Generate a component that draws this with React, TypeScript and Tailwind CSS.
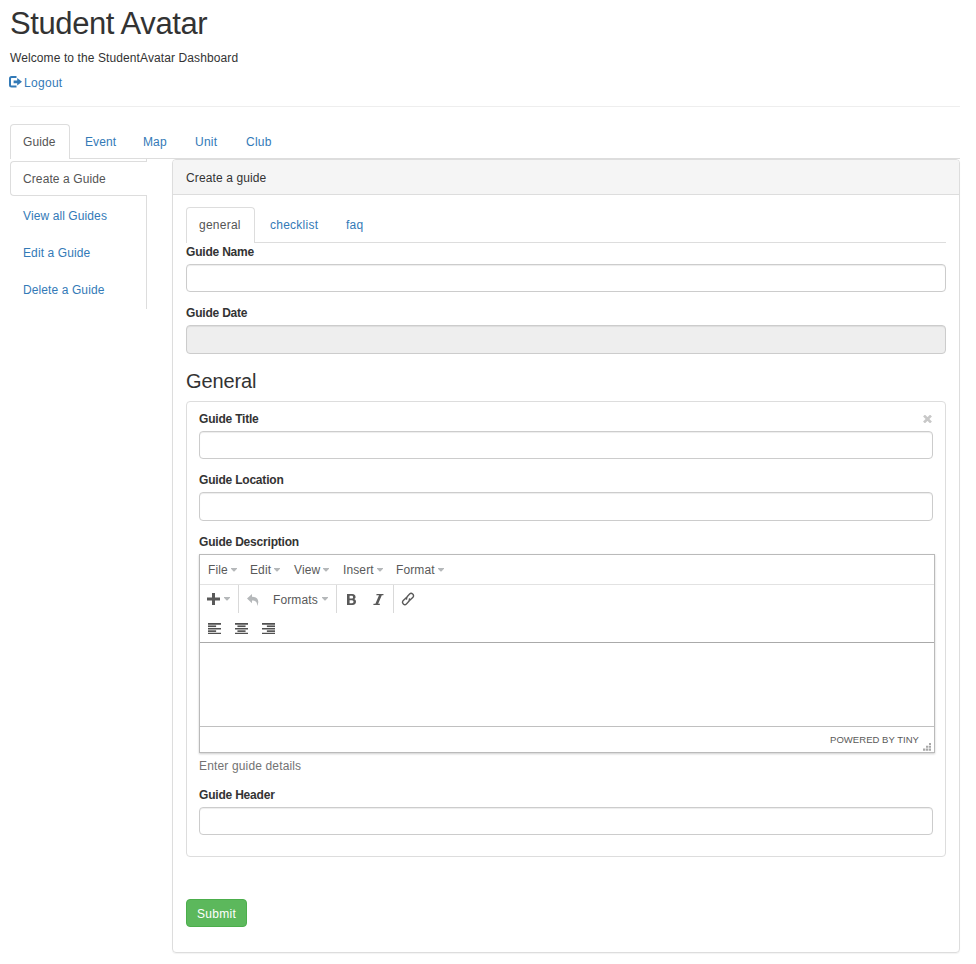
import React from "react";

const mainTabs = [
  { label: "Event", cls: "w-[58px]" },
  { label: "Map", cls: "w-[52px]" },
  { label: "Unit", cls: "w-[51px] tracking-[0.25px]" },
  { label: "Club", cls: "w-[56px] tracking-[0.25px]" },
];

const Caret = ({ className = "" }: { className?: string }) => (
  <svg className={`shrink-0 ${className}`} width="6" height="4" viewBox="0 0 6 4" fill="#b5b8ba">
    <path d="M0 0H6V.8L3.4 3.4H2.6L0 .8Z" />
  </svg>
);

const Label = ({ children }: { children: React.ReactNode }) => (
  <label className="block h-[18px] text-[12px] font-bold leading-[18px] tracking-[-0.2px]">{children}</label>
);

const Field = ({ className = "h-7" }: { className?: string }) => (
  <input
    className={`block w-full rounded-[4px] border border-[#ccc] bg-white px-2.5 shadow-[inset_0_1px_1px_rgba(0,0,0,0.075)] outline-none ${className}`}
  />
);

const Menu = ({ label, width, gap }: { label: string; width: string; gap: string }) => (
  <div className={`flex items-center ${width}`}>
    <span className={gap}>{label}</span>
    <Caret />
  </div>
);

const Align = ({ offset }: { offset: number }) => (
  <svg className="mr-[14px] mt-[2px]" width="13" height="11.4" viewBox="0 0 16 14" fill="#505050">
    <path d="M0 0h16v2H0zM0 6h16v2H0zM0 12h16v2H0z" />
    <rect x={offset} y="3" width="10" height="2" />
    <rect x={offset} y="9" width="10" height="2" />
  </svg>
);

export default function App() {
  return (
    <div className="h-[964px] w-[976px] overflow-hidden bg-white pl-[10px] pr-4 font-['Liberation_Sans',Arial,sans-serif] text-[12px] leading-[18px] tracking-[0.12px] text-[#333]">
      <h1 className="h-[49px] pt-[6px] text-[31px] leading-[35px] tracking-[-0.4px]">Student Avatar</h1>
      <p className="h-[25px] tracking-[0.1px]">Welcome to the StudentAvatar Dashboard</p>
      <a className="flex h-[32px] items-start tracking-[0.3px] text-[#337ab7]">
        <svg className="-ml-px mr-[2px] mt-[2px]" width="13" height="12" viewBox="0 0 13 12" fill="none">
          <path d="M7.5 1.1H2.6Q1 1.1 1 2.7V9Q1 10.5 2.6 10.5H7.5" stroke="#337ab7" strokeWidth="2" />
          <path d="M4.6 4.4H8.2V2L13 5.8L8.2 9.6V7.2H4.6Z" fill="#337ab7" />
        </svg>
        Logout
      </a>
      <hr className="mb-[17px] border-0 border-t border-[#eee]" />

      <nav className="flex h-[35px] border-b border-[#ddd] text-[#337ab7]">
        <a className="h-[35px] w-[60px] rounded-t-[4px] border border-b-0 border-[#ddd] bg-white pl-3 pt-2 text-[#555]">Guide</a>
        <div className="flex pl-[15px] pt-[9px]">
          {mainTabs.map((t) => (
            <a key={t.label} className={t.cls}>{t.label}</a>
          ))}
        </div>
      </nav>

      <div className="flex">
        <aside className="mr-[25px] h-[150px] w-[137px] shrink-0 border-r border-[#ddd] pt-[2px] tracking-[0.1px] text-[#337ab7]">
          <a className="-mr-px block h-[35px] rounded-l-[4px] border border-r-0 border-[#ddd] bg-white pl-3 pt-2 text-[#555]">Create a Guide</a>
          {["View all Guides", "Edit a Guide", "Delete a Guide"].map((t) => (
            <a key={t} className="mt-0.5 block h-[35px] pl-[13px] pt-[9px]">{t}</a>
          ))}
        </aside>

        <main className="h-[794px] w-[788px] rounded-[4px] border border-[#ddd] shadow-[0_1px_1px_rgba(0,0,0,0.05)]">
          <header className="h-[35px] rounded-t-[3px] border-b border-[#ddd] bg-[#f5f5f5] pl-[13px] pt-[9px]">Create a guide</header>
          <div className="px-[13px] pt-3">
            <nav className="flex h-[36px] border-b border-[#ddd] tracking-[0.25px] text-[#337ab7]">
              <a className="h-[36px] w-[69px] rounded-t-[4px] border border-b-0 border-[#ddd] bg-white pl-3 pt-2 text-[#555]">general</a>
              <a className="w-[76px] pl-[15px] pt-[9px]">checklist</a>
              <a className="pl-[15px] pt-[9px]">faq</a>
            </nav>
            <Label>Guide Name</Label>
            <div className="mb-3 mt-[3px]"><Field /></div>
            <Label>Guide Date</Label>
            <div className="mt-[3px]"><Field className="h-[29px] bg-[#eee]!" /></div>
            <h3 className="mb-[9px] mt-[16px] h-[22px] text-[20px] leading-[22px] tracking-[-0.1px]">General</h3>

            <section className="h-[456px] rounded-[4px] border border-[#ddd] px-3 pt-2">
              <div className="flex justify-between">
                <Label>Guide Title</Label>
                <svg className="mr-[1px] mt-[5px]" width="9" height="8" viewBox="0 0 9 8" stroke="#c8c8c8" strokeWidth="2.6">
                  <path d="M1 .5L8 7.5M8 .5L1 7.5" />
                </svg>
              </div>
              <div className="mb-3 mt-[3px]"><Field /></div>
              <Label>Guide Location</Label>
              <div className="mb-3 mt-[3px]"><Field className="h-[29px]" /></div>
              <Label>Guide Description</Label>

              <div className="mt-[3px] h-[199px] w-[736px] border border-[#bababa] text-[#595959] shadow-[0_1px_2px_rgba(0,0,0,0.2)]">
                <div className="flex h-[30px] border-b border-[#e2e2e2] pl-2">
                  <Menu label="File" width="w-[42px]" gap="w-[23px]" />
                  <Menu label="Edit" width="w-[44px]" gap="w-[24px]" />
                  <Menu label="View" width="w-[49px]" gap="w-[29px]" />
                  <Menu label="Insert" width="w-[53px]" gap="w-[34px]" />
                  <Menu label="Format" width="w-[60px]" gap="w-[42px]" />
                </div>
                <div className="flex h-[28px] items-center">
                  <div className="flex h-full w-[39px] items-center border-r border-[#d9d9d9] pl-[7px]">
                    <svg width="13" height="12" viewBox="0 0 13 12" fill="#595959"><path d="M5 0H8V4.5H13V7.5H8V12H5V7.5H0V4.5H5Z" /></svg>
                    <Caret className="ml-[4px]" />
                  </div>
                  <div className="flex h-full w-[98px] items-center border-r border-[#d9d9d9] pl-[8px]">
                    <svg className="mt-px" width="12" height="12" viewBox="0 0 12 12" fill="#b5b8ba"><path d="M0 4.5L5 0V2.7C10 2.7 13.2 6 10 12C10.5 8 8.5 6.6 5 6.6V9.2Z" /></svg>
                    <span className="ml-[14px] w-[49px] pt-px">Formats</span>
                    <Caret />
                  </div>
                  <div className="flex h-full w-[57px] items-center border-r border-[#d9d9d9] pl-[10px]">
                    <svg width="9" height="11" viewBox="0 0 9 11" fill="#595959" fillRule="evenodd"><path d="M0 0H5.2C9.2 0 9.3 4.3 7.2 5.1C10 6 9.6 11 5.4 11H0ZM2.6 1.8V4.4H4.7C6.6 4.4 6.5 1.8 4.7 1.8ZM2.6 6.2V9.2H5C7 9.2 7 6.2 5 6.2Z" /></svg>
                    <svg className="ml-[17px]" width="11" height="11" viewBox="0 0 11 11" fill="#595959"><path d="M3.6 0H10.6L10.3 1.2H8.8L5.2 9.8H7L6.7 11H.3L.6 9.8H2.4L6 1.2H3.3Z" /></svg>
                  </div>
                  <svg className="ml-[7px]" width="14" height="14" viewBox="0 0 14 14" fill="none" stroke="#595959" strokeWidth="1.4"><path d="M5.9 7.5C5 6.3 5.3 5.4 6.3 4.4L8.6 2C10.6 .2 13.6 3 12 5.2L9.6 7.6C8.8 8.3 8.2 8.4 7.5 8.1M8.1 6.5C9 7.7 8.7 8.6 7.7 9.6L5.4 12C3.4 13.8 .4 11 2 8.8L4.4 6.4C5.2 5.7 5.8 5.6 6.5 5.9" /></svg>
                </div>
                <div className="flex h-[30px] items-center border-b border-[#aaa] pl-[7.5px]">
                  <Align offset={0} />
                  <Align offset={3} />
                  <Align offset={6} />
                </div>
                <div className="h-[83px]" />
                <div className="relative flex h-[26px] justify-end border-t border-[#c0c0c0] pr-[15px] pt-1 text-[9.5px] tracking-[0.04px]">
                  POWERED BY TINY
                  <svg className="absolute bottom-[1px] right-[3px]" width="8" height="8" viewBox="0 0 8 8" fill="#a8a8a8">
                    <path d="M6 0h2v2h-2zM6 2.7h2v2h-2zM3 2.7h2.4v2h-2.4zM6 5.5h2v2.3h-2zM3 5.5h2.4v2.3h-2.4zM0 5.5h2.4v2.3h-2.4z" />
                  </svg>
                </div>
              </div>
              <p className="mb-[11px] mt-[4px] h-[18px] tracking-[0.15px] text-[#737373]">Enter guide details</p>
              <Label>Guide Header</Label>
              <div className="mt-[3px]"><Field /></div>
            </section>

            <button className="mt-[42px] block h-7 w-[61px] rounded-[4px] border border-[#4cae4c] bg-[#5cb85c] pt-px tracking-[0.3px] text-white">Submit</button>
          </div>
        </main>
      </div>
    </div>
  );
}
